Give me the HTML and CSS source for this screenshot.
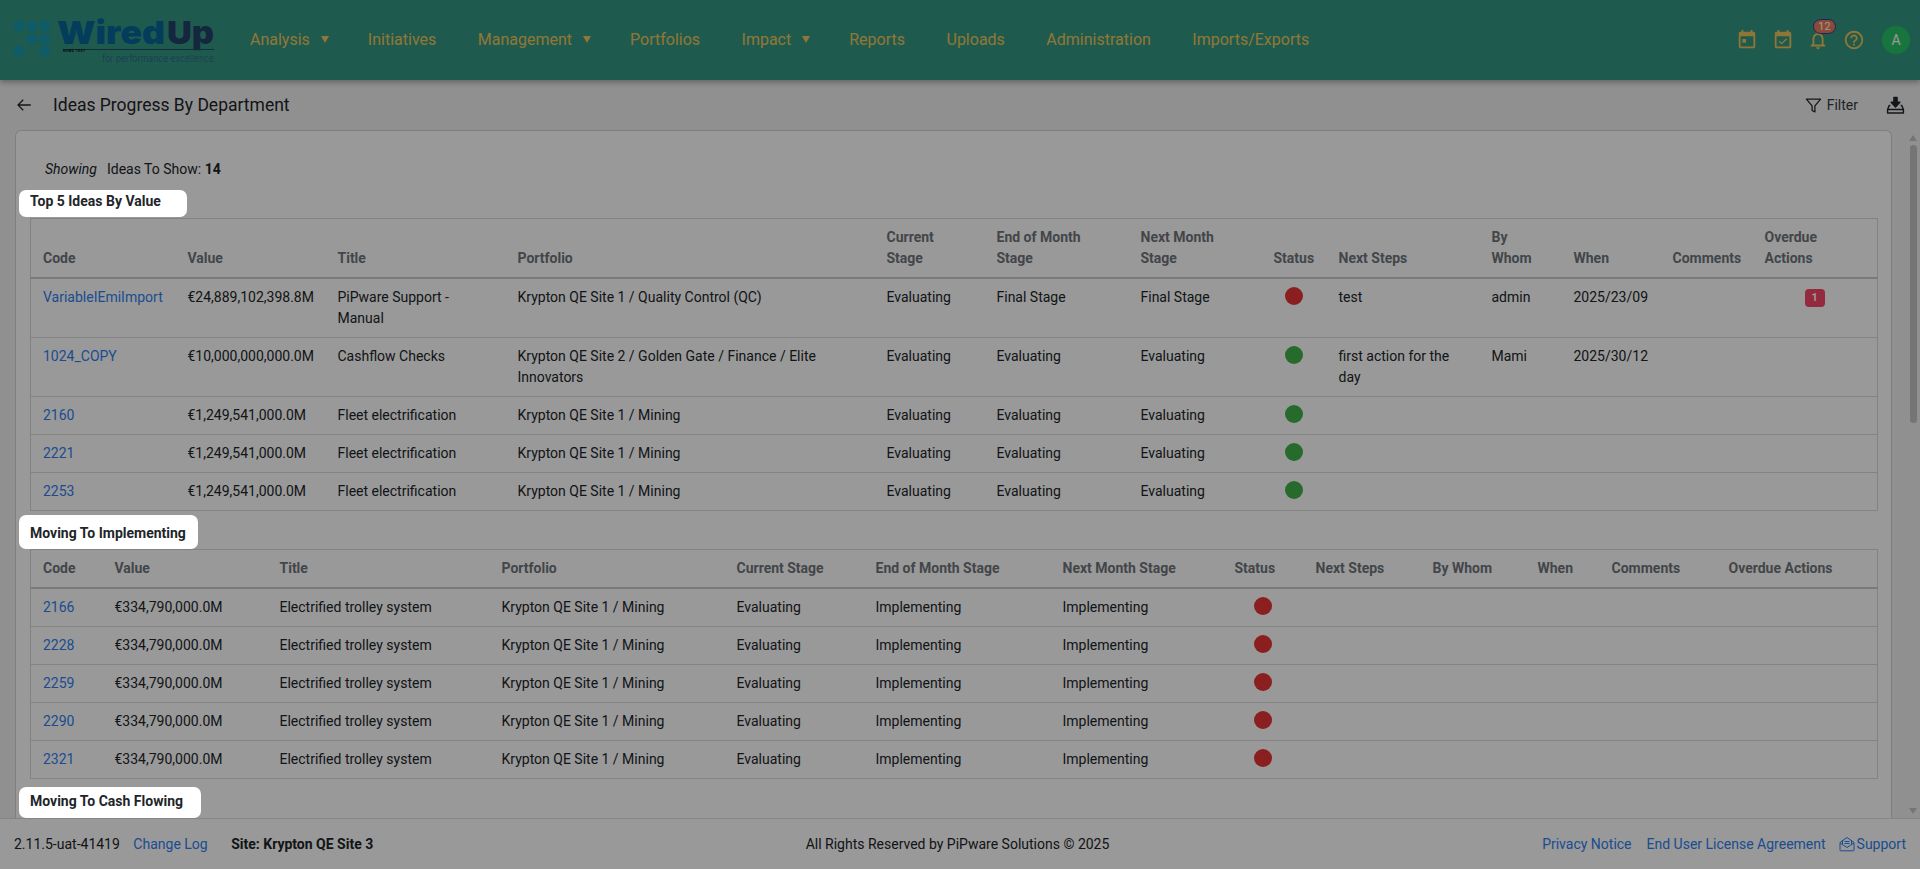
FILE: index.html
```html
<!DOCTYPE html>
<html lang="en">
<head>
<meta charset="utf-8">
<title>Ideas Progress By Department</title>
<link rel="stylesheet" href="styles.css">
</head>
<body>
<header class="topbar">
  <svg class="logo" width="226" height="68" viewBox="0 0 226 68" role="img" aria-label="WiredUp">
    <g class="logo-dots">
      <circle cx="19" cy="26" r="5.5"/><circle cx="32" cy="26" r="5.5"/><circle cx="45" cy="26" r="5.5"/>
      <circle cx="32" cy="39" r="5.5"/><circle cx="45" cy="39" r="5.5"/>
      <circle cx="19" cy="51" r="5.5"/><circle cx="45" cy="51" r="5.5"/>
    </g>
    <text class="logo-wired" x="57" y="43.5" textLength="108" lengthAdjust="spacingAndGlyphs">Wired</text>
    <text class="logo-up" x="167" y="43.5" textLength="47" lengthAdjust="spacingAndGlyphs">Up</text>
    <line class="logo-line" x1="63" y1="49.5" x2="214" y2="49.5"/>
    <text class="logo-tiny" x="63" y="52" textLength="22">HUMO TEST</text>
    <text class="logo-tag" x="102" y="62" textLength="112" lengthAdjust="spacingAndGlyphs">for performance excellence</text>
  </svg>
  <nav class="mainnav">
    <a class="navitem">Analysis<span class="caret"></span></a>
    <a class="navitem">Initiatives</a>
    <a class="navitem">Management<span class="caret"></span></a>
    <a class="navitem">Portfolios</a>
    <a class="navitem">Impact<span class="caret"></span></a>
    <a class="navitem">Reports</a>
    <a class="navitem">Uploads</a>
    <a class="navitem">Administration</a>
    <a class="navitem">Imports/Exports</a>
  </nav>
  <div class="topicons">
    <svg class="ticon" viewBox="0 0 24 24"><path d="M11 11H7v4h4v-4zM16 1v2H8V1H6v2H5c-1.110 0-1.990.9-1.990 2L3 19c0 1.100.89 2 2 2h14c1.100 0 2-.9 2-2V5c0-1.100-.9-2-2-2h-1V1h-2zm3 18H5V8h14v11z"/></svg>
    <svg class="ticon" viewBox="0 0 24 24"><path d="M16.530 11.060L15.470 10l-4.880 4.880-2.120-2.120-1.060 1.060L10.590 17l5.940-5.940zM19 3h-1V1h-2v2H8V1H6v2H5c-1.110 0-1.990.9-1.990 2L3 19c0 1.100.89 2 2 2h14c1.100 0 2-.9 2-2V5c0-1.100-.9-2-2-2zm0 16H5V8h14v11z"/></svg>
    <span class="bellwrap">
      <svg class="ticon" viewBox="0 0 24 24"><path d="M12 22c1.100 0 2-.9 2-2h-4c0 1.100.9 2 2 2zm6-6v-5c0-3.070-1.630-5.640-4.500-6.320V4c0-.83-.67-1.500-1.500-1.500s-1.500.67-1.500 1.500v.68C7.640 5.360 6 7.920 6 11v5l-2 2v1h16v-1l-2-2zm-2 1H8v-6c0-2.480 1.510-4.500 4-4.500s4 2.020 4 4.500v6z"/></svg>
      <span class="bellbadge">12</span>
    </span>
    <svg class="ticon" viewBox="0 0 24 24"><path d="M11 18h2v-2h-2v2zm1-16C6.480 2 2 6.480 2 12s4.480 10 10 10 10-4.480 10-10S17.520 2 12 2zm0 18c-4.410 0-8-3.590-8-8s3.590-8 8-8 8 3.590 8 8-3.590 8-8 8zm0-14c-2.210 0-4 1.790-4 4h2c0-1.100.9-2 2-2s2 .9 2 2c0 2-3 1.750-3 5h2c0-2.250 3-2.500 3-5 0-2.210-1.790-4-4-4z"/></svg>
    <span class="avatar">A</span>
  </div>
</header>

<div class="subbar">
  <svg class="backicon" viewBox="0 0 24 24"><path d="M21 12H4M11 5l-7 7 7 7"/></svg>
  <h1 class="pagetitle">Ideas Progress By Department</h1>
  <div class="subtools">
    <span class="filter">
      <svg class="filtericon" viewBox="0 0 24 24"><path d="M22 3H2l8 9.460V19l4 2v-8.540z"/></svg>
      Filter
    </span>
    <svg class="dlicon" viewBox="0 0 24 24"><path class="dlarrow" d="M10 2h4v6h3.500L12 14 6.500 8H10z"/><path d="M5.500 12H4l-2 5v4.500h20V17l-2-5h-1.500M2 17h20"/></svg>
  </div>
</div>

<div class="contentrow">
  <main class="scroller">
    <section class="card">
      <p class="showing"><em class="showing-label">Showing</em><span>Ideas To Show: <strong>14</strong></span></p>

      <h2 class="hilite hilite-a">Top 5 Ideas By Value</h2>
      <table class="grid grid-a">
        <colgroup><col><col><col><col><col><col><col><col><col><col><col><col><col></colgroup>
        <thead><tr><th>Code</th><th>Value</th><th>Title</th><th>Portfolio</th><th>Current Stage</th><th>End of Month Stage</th><th>Next Month Stage</th><th>Status</th><th>Next Steps</th><th>By Whom</th><th>When</th><th>Comments</th><th>Overdue Actions</th></tr></thead>
        <tbody>
          <tr><td><a class="link">VariableIEmiImport</a></td><td>€24,889,102,398.8M</td><td>PiPware Support - Manual</td><td>Krypton QE Site 1 / Quality Control (QC)</td><td>Evaluating</td><td>Final Stage</td><td>Final Stage</td><td class="mid"><span class="dot red"></span></td><td>test</td><td>admin</td><td>2025/23/09</td><td></td><td class="mid"><span class="count">1</span></td></tr>
          <tr><td><a class="link">1024_COPY</a></td><td>€10,000,000,000.0M</td><td>Cashflow Checks</td><td>Krypton QE Site 2 / Golden Gate / Finance / Elite Innovators</td><td>Evaluating</td><td>Evaluating</td><td>Evaluating</td><td class="mid"><span class="dot green"></span></td><td>first action for the day</td><td>Mami</td><td>2025/30/12</td><td></td><td></td></tr>
          <tr><td><a class="link">2160</a></td><td>€1,249,541,000.0M</td><td>Fleet electrification</td><td>Krypton QE Site 1 / Mining</td><td>Evaluating</td><td>Evaluating</td><td>Evaluating</td><td class="mid"><span class="dot green"></span></td><td></td><td></td><td></td><td></td><td></td></tr>
          <tr><td><a class="link">2221</a></td><td>€1,249,541,000.0M</td><td>Fleet electrification</td><td>Krypton QE Site 1 / Mining</td><td>Evaluating</td><td>Evaluating</td><td>Evaluating</td><td class="mid"><span class="dot green"></span></td><td></td><td></td><td></td><td></td><td></td></tr>
          <tr><td><a class="link">2253</a></td><td>€1,249,541,000.0M</td><td>Fleet electrification</td><td>Krypton QE Site 1 / Mining</td><td>Evaluating</td><td>Evaluating</td><td>Evaluating</td><td class="mid"><span class="dot green"></span></td><td></td><td></td><td></td><td></td><td></td></tr>
        </tbody>
      </table>

      <h2 class="hilite hilite-b">Moving To Implementing</h2>
      <table class="grid grid-b">
        <colgroup><col><col><col><col><col><col><col><col><col><col><col><col><col></colgroup>
        <thead><tr><th>Code</th><th>Value</th><th>Title</th><th>Portfolio</th><th>Current Stage</th><th>End of Month Stage</th><th>Next Month Stage</th><th>Status</th><th>Next Steps</th><th>By Whom</th><th>When</th><th>Comments</th><th>Overdue Actions</th></tr></thead>
        <tbody>
          <tr><td><a class="link">2166</a></td><td>€334,790,000.0M</td><td>Electrified trolley system</td><td>Krypton QE Site 1 / Mining</td><td>Evaluating</td><td>Implementing</td><td>Implementing</td><td class="mid"><span class="dot red"></span></td><td></td><td></td><td></td><td></td><td></td></tr>
          <tr><td><a class="link">2228</a></td><td>€334,790,000.0M</td><td>Electrified trolley system</td><td>Krypton QE Site 1 / Mining</td><td>Evaluating</td><td>Implementing</td><td>Implementing</td><td class="mid"><span class="dot red"></span></td><td></td><td></td><td></td><td></td><td></td></tr>
          <tr><td><a class="link">2259</a></td><td>€334,790,000.0M</td><td>Electrified trolley system</td><td>Krypton QE Site 1 / Mining</td><td>Evaluating</td><td>Implementing</td><td>Implementing</td><td class="mid"><span class="dot red"></span></td><td></td><td></td><td></td><td></td><td></td></tr>
          <tr><td><a class="link">2290</a></td><td>€334,790,000.0M</td><td>Electrified trolley system</td><td>Krypton QE Site 1 / Mining</td><td>Evaluating</td><td>Implementing</td><td>Implementing</td><td class="mid"><span class="dot red"></span></td><td></td><td></td><td></td><td></td><td></td></tr>
          <tr><td><a class="link">2321</a></td><td>€334,790,000.0M</td><td>Electrified trolley system</td><td>Krypton QE Site 1 / Mining</td><td>Evaluating</td><td>Implementing</td><td>Implementing</td><td class="mid"><span class="dot red"></span></td><td></td><td></td><td></td><td></td><td></td></tr>
        </tbody>
      </table>

      <h2 class="hilite hilite-c">Moving To Cash Flowing</h2>
      <div class="gridstub"></div>
    </section>
  </main>
  <aside class="sbar">
    <span class="sbar-up"></span>
    <span class="sbar-thumb"></span>
    <span class="sbar-down"></span>
  </aside>
</div>

<footer class="footer">
  <div class="foot-left">
    <span>2.11.5-uat-41419</span>
    <a class="link">Change Log</a>
    <strong class="site">Site: Krypton QE Site 3</strong>
  </div>
  <div class="foot-mid">All Rights Reserved by PiPware Solutions © 2025</div>
  <div class="foot-right">
    <a class="link privacy">Privacy Notice</a>
    <a class="link">End User License Agreement</a>
    <a class="link support">
      <svg class="supporticon" viewBox="0 0 16 16"><path d="M1 6.500L8 1.500l7 5v7.500a.8.8 0 0 1-.8.8H1.800a.8.8 0 0 1-.8-.8zM1 7l7 4.500L15 7M3.500 8V4M12.500 8V4M5.500 5.500h5M5.500 7.500h5"/></svg>Support
    </a>
  </div>
</footer>

<div class="backdrop"></div>
</body>
</html>
```

FILE: styles.css
```css
* { box-sizing: border-box; }
html, body { height: 100%; }
body {
  margin: 0;
  display: flex;
  flex-direction: column;
  height: 100vh;
  overflow: hidden;
  background: #f0f0f0;
  color: #212529;
  font: 14px/21px Roboto, "Liberation Sans", sans-serif;
}
.backdrop {
  position: fixed;
  inset: 0;
  z-index: 10;
  background: rgba(0, 0, 0, .4);
}

/* top bar */
.topbar {
  flex: 0 0 80px;
  display: flex;
  align-items: center;
  background: #359682;
  box-shadow: 0 2px 6px rgba(0, 0, 0, .35);
  position: relative;
  z-index: 2;
}
.logo { flex: none; align-self: flex-start; margin-right: 24px; }
.logo-dots { fill: #1a98ae; }
.logo-wired { fill: #08659a; font: 900 32px Inter, "Liberation Sans", sans-serif; }
.logo-up { fill: #24426a; font: 900 32px Inter, "Liberation Sans", sans-serif; }
.logo-line { stroke: #1d4f5f; stroke-width: 1; }
.logo-tiny { fill: #000; font: 700 3px Roboto, sans-serif; }
.logo-tag { fill: #28708a; font: 400 9.500px Inter, sans-serif; }
.mainnav { display: flex; align-items: center; gap: 41.500px; margin-top: -1px; }
.navitem { display: flex; align-items: center; color: #ecc85c; font-size: 16px; line-height: 24px; }
.caret {
  margin: 0 -2.500px 0 11px;
  border-left: 4px solid transparent;
  border-right: 4px solid transparent;
  border-top: 7px solid #ecc85c;
}
.topicons { margin-left: auto; display: flex; align-items: center; }
.ticon { width: 22px; height: 22px; fill: #f0c55a; display: block; margin-right: 13.500px; }
.bellwrap { position: relative; display: block; }
.bellbadge {
  position: absolute;
  top: -10px;
  left: 6px;
  width: 23px;
  height: 15px;
  border-radius: 8px;
  border: 1px solid #2b3f9e;
  background: #ea7a58;
  color: #fff;
  font-size: 11px;
  line-height: 13px;
  text-align: center;
}
.avatar {
  width: 28px;
  height: 28px;
  margin: 0 10px 0 4px;
  border-radius: 50%;
  background: #28c466;
  color: #fff;
  font-size: 14px;
  line-height: 28px;
  text-align: center;
}

/* sub bar */
.subbar {
  flex: 0 0 50px;
  display: flex;
  align-items: center;
  padding: 0 15px 0 15px;
}
.backicon { width: 18px; height: 18px; margin-right: 20px; fill: none; stroke: #212529; stroke-width: 1.700; }
.pagetitle { margin: 0; font-size: 17.500px; font-weight: 400; line-height: 24px; color: #212529; }
.subtools { margin-left: auto; display: flex; align-items: center; }
.filter { display: flex; align-items: center; gap: 5px; color: #343a40; }
.filtericon { width: 17px; height: 17px; fill: none; stroke: #212529; stroke-width: 1.800; stroke-linejoin: round; }
.dlicon { width: 19px; height: 19px; margin-left: 28px; fill: none; stroke: #212529; stroke-width: 1.800; stroke-linejoin: round; }
.dlarrow { fill: #212529; }

/* content */
.contentrow { flex: 1 1 0; min-height: 0; display: flex; }
.scroller { flex: 1 1 0; min-width: 0; overflow: hidden; }
.sbar {
  flex: 0 0 14px;
  display: flex;
  flex-direction: column;
  align-items: center;
}
.sbar-up, .sbar-down {
  flex: none;
  border-left: 4.500px solid transparent;
  border-right: 4.500px solid transparent;
}
.sbar-up { margin-top: 5px; border-bottom: 6px solid #c4c4c4; }
.sbar-thumb { flex: none; width: 7px; height: 278px; margin-top: 4px; border-radius: 4px; background: #c4c4c4; }
.sbar-down { margin-top: auto; margin-bottom: 4px; border-top: 6px solid #c4c4c4; }
.card {
  margin: 0 14px 0 15px;
  padding: 28px 14px 60px 14px;
  background: #fff;
  border: 1px solid #d4d4d4;
  border-bottom: 0;
  border-radius: 6px 6px 0 0;
}
.showing { margin: 0 0 10px 15px; display: flex; gap: 10px; }
.showing-label { font-style: italic; }
.hilite {
  position: relative;
  z-index: 11;
  display: block;
  margin: 0 0 0 -11px;
  padding: 0 0 0 11px;
  background: #fff;
  border-radius: 7px;
  color: #212529;
  font-size: 14px;
  font-weight: 700;
}
.hilite-a { width: 168px; height: 27px; line-height: 22px; margin-bottom: 1px; }
.hilite-b { width: 179px; height: 34px; line-height: 36px; margin-top: 4px; margin-bottom: 0; }
.hilite-c { width: 182px; height: 31px; line-height: 28px; margin-top: 8px; }

.grid {
  width: 1847px;
  table-layout: fixed;
  border-collapse: collapse;
  border: 1px solid #d7d9db;
}
.gridstub { width: 1847px; height: 120px; border: 1px solid #d7d9db; }
.grid th {
  padding: 8px 12px;
  color: #6f757b;
  font-weight: 700;
  text-align: left;
  vertical-align: bottom;
  border-bottom: 2px solid #c9ccd2;
}
.grid td {
  padding: 8px 12px;
  vertical-align: top;
  border-bottom: 1px solid #dcdcdc;
}
.grid td.mid { text-align: center; }
.grid-a col:nth-child(1) { width: 145px; }
.grid-a col:nth-child(2) { width: 150px; }
.grid-a col:nth-child(3) { width: 180px; }
.grid-a col:nth-child(4) { width: 369px; }
.grid-a col:nth-child(5) { width: 110px; }
.grid-a col:nth-child(6) { width: 144px; }
.grid-a col:nth-child(7) { width: 133px; }
.grid-a col:nth-child(8) { width: 65px; }
.grid-a col:nth-child(9) { width: 153px; }
.grid-a col:nth-child(10) { width: 82px; }
.grid-a col:nth-child(11) { width: 99px; }
.grid-a col:nth-child(12) { width: 92px; }
.grid-a col:nth-child(13) { width: 125px; }
.grid-b col:nth-child(1) { width: 72px; }
.grid-b col:nth-child(2) { width: 165px; }
.grid-b col:nth-child(3) { width: 222px; }
.grid-b col:nth-child(4) { width: 235px; }
.grid-b col:nth-child(5) { width: 139px; }
.grid-b col:nth-child(6) { width: 187px; }
.grid-b col:nth-child(7) { width: 172px; }
.grid-b col:nth-child(8) { width: 81px; }
.grid-b col:nth-child(9) { width: 117px; }
.grid-b col:nth-child(10) { width: 105px; }
.grid-b col:nth-child(11) { width: 74px; }
.grid-b col:nth-child(12) { width: 117px; }
.grid-b col:nth-child(13) { width: 161px; }
.link { color: #2f7ff0; text-decoration: none; }
.dot { display: block; width: 18px; height: 18px; margin: 0 auto; border-radius: 50%; }
.dot.red { background: #e83232; }
.dot.green { background: #40b14a; }
.count {
  display: inline-block;
  width: 20px;
  height: 18px;
  margin-top: 2px;
  border-radius: 4px;
  background: #f54768;
  color: #fff;
  font-size: 11px;
  font-weight: 700;
  line-height: 18px;
  text-align: center;
  vertical-align: top;
}

/* footer */
.footer {
  flex: 0 0 51px;
  display: grid;
  grid-template-columns: 1fr auto 1fr;
  align-items: center;
  padding: 0 14px;
  background: #fff;
  border-top: 1px solid #e0e0e0;
  position: relative;
  z-index: 2;
}
.foot-left { display: flex; gap: 13.500px; }
.site { margin-left: 10px; }
.foot-mid { margin-right: 5px; }
.foot-right { display: flex; justify-content: flex-end; gap: 14px; }
.privacy { margin-right: 1px; }
.support { display: flex; align-items: center; gap: 2px; margin-left: -1px; }
.supporticon { width: 16px; height: 16px; fill: none; stroke: #2f7ff0; stroke-width: 1; }
```
